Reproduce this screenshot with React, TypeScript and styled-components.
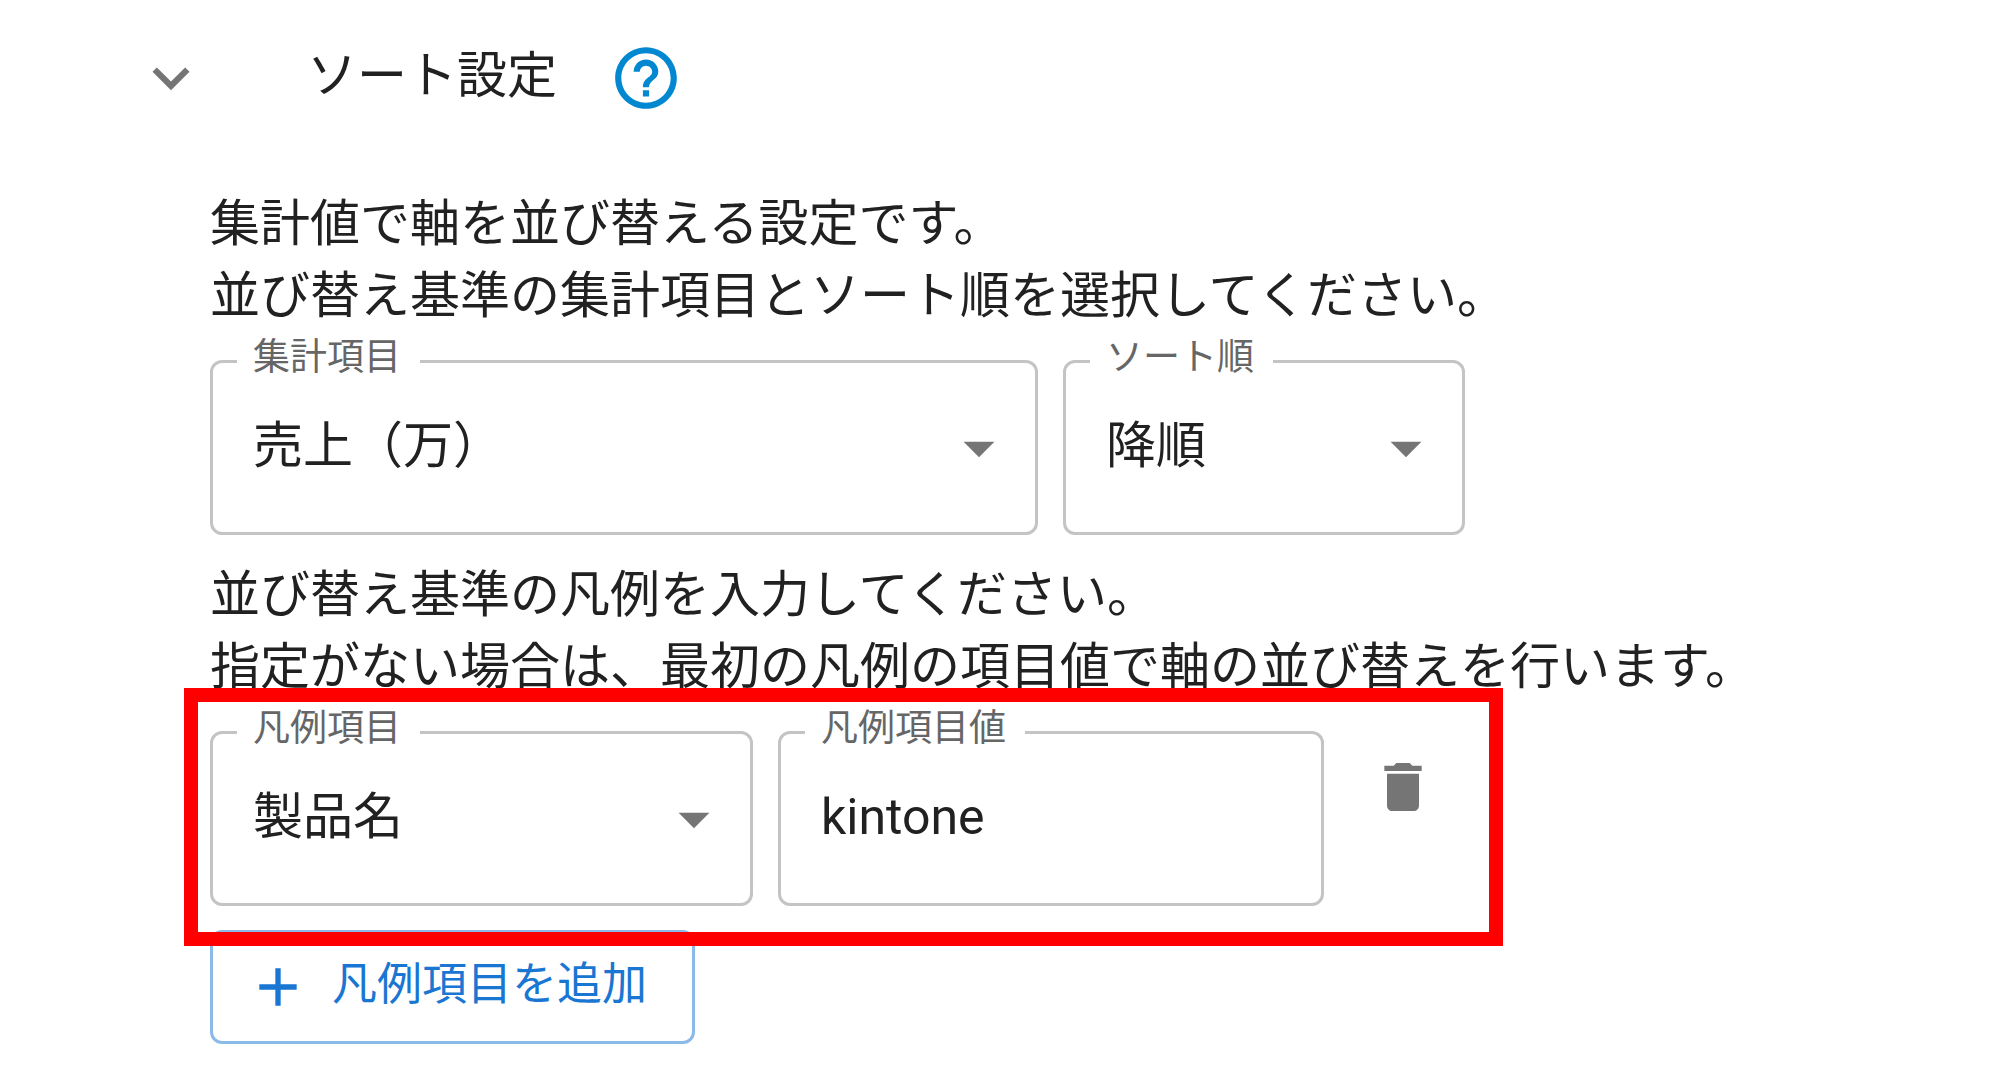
import React, { useId, useState } from "react";
import styled, { createGlobalStyle } from "styled-components";

const GlobalStyle = createGlobalStyle`
  *, *::before, *::after { box-sizing: border-box; }
  body {
    margin: 0;
    background: #fff;
    color: #212121;
    font-family: Roboto, "Noto Sans CJK JP", sans-serif;
    font-size: 50px;
    line-height: 72px;
  }
  button, input, select { font: inherit; color: inherit; }
`;

const Page = styled.main`
  padding: 41px 76px 40px 134px;
`;

const Header = styled.header`
  display: flex;
  align-items: center;
  height: 74px;
  margin-bottom: 73px;
`;

const Title = styled.h2`
  margin: 0 52px 0 99px;
  font-size: 50px;
  font-weight: 400;
  line-height: 74px;
  padding-bottom: 4px;
`;

const IconButton = styled.button<{ $color?: string; $pad?: string }>`
  display: inline-flex;
  flex: none;
  padding: ${(p) => p.$pad ?? "0"};
  border: 0;
  border-radius: 50%;
  background: none;
  color: ${(p) => p.$color ?? "#757575"};
  cursor: pointer;
`;

const Icon = styled.svg<{ $size: number }>`
  display: block;
  flex: none;
  width: ${(p) => p.$size}px;
  height: ${(p) => p.$size}px;
  fill: currentColor;
`;

const Content = styled.section`
  padding-left: 76px;
`;

const Description = styled.p`
  margin: 0 0 28px;
`;

const Row = styled.div`
  position: relative;
  display: flex;
  align-items: flex-start;
  gap: 25px;
  width: fit-content;
  max-width: 100%;
  margin-bottom: 24px;
`;

const FieldBox = styled.div<{ $width: number }>`
  position: relative;
  display: flex;
  flex: 0 1 ${(p) => p.$width}px;
  width: ${(p) => p.$width}px;
  min-width: 0;
  border: 3px solid #c4c4c4;
  border-radius: 12px;
`;

const FieldLabel = styled.label`
  position: absolute;
  top: -24px;
  left: 24px;
  padding: 0 19px 0 16px;
  background: #fff;
  color: #666;
  font-size: 37px;
  line-height: 37px;
  white-space: nowrap;
`;

const controlStyle = `
  width: 100%;
  min-width: 0;
  height: 169px;
  padding: 0 40px 3px;
  border: 0;
  border-radius: 12px;
  outline: 0;
  background: none;
`;

const Select = styled.select`
  ${controlStyle}
  appearance: none;
`;

const Input = styled.input`
  ${controlStyle}
`;

const Arrow = styled(Icon)`
  position: absolute;
  top: 48px;
  right: 19px;
  color: #757575;
  pointer-events: none;
`;

const Highlight = styled.div`
  position: absolute;
  inset: -43px -50px -40px -26px;
  z-index: 1;
  border: 14px solid #f00;
  pointer-events: none;
`;

const AddButton = styled.button`
  display: inline-flex;
  align-items: center;
  gap: 22px;
  height: 114px;
  padding: 0 45px 0 33px;
  border: 3px solid #8cbae8;
  border-radius: 12px;
  background: #fff;
  color: #1976d2;
  font-size: 45px;
  cursor: pointer;
`;

const AddText = styled.span`
  padding-bottom: 4px;
`;

const paths = {
  expand: "M16.59 8.59 12 13.17 7.41 8.59 6 10l6 6 6-6z",
  help: "M11 18h2v-2h-2v2zm1-16C6.48 2 2 6.48 2 12s4.48 10 10 10 10-4.48 10-10S17.52 2 12 2zm0 18c-4.41 0-8-3.59-8-8s3.59-8 8-8 8 3.59 8 8-3.59 8-8 8zm0-14c-2.21 0-4 1.79-4 4h2c0-1.1.9-2 2-2s2 .9 2 2c0 2-3 1.75-3 5h2c0-2.25 3-2.5 3-5 0-2.21-1.79-4-4-4z",
  arrow: "M7 10l5 5 5-5z",
  trash: "M6 19c0 1.1.9 2 2 2h8c1.1 0 2-.9 2-2V7H6v12zM19 4h-3.5l-1-1h-5l-1 1H5v2h14V4z",
  plus: "M19 13h-6v6h-2v-6H5v-2h6V5h2v6h6v2z",
};

function SelectField({ label, width, options }: { label: string; width: number; options: string[] }) {
  const id = useId();
  return (
    <FieldBox $width={width}>
      <FieldLabel htmlFor={id}>{label}</FieldLabel>
      <Select id={id} defaultValue={options[0]}>
        {options.map((o) => (
          <option key={o}>{o}</option>
        ))}
      </Select>
      <Arrow $size={74} viewBox="0 0 24 24" aria-hidden>
        <path d={paths.arrow} />
      </Arrow>
    </FieldBox>
  );
}

function TextField({ label, width, initial }: { label: string; width: number; initial: string }) {
  const id = useId();
  const [value, setValue] = useState(initial);
  return (
    <FieldBox $width={width}>
      <FieldLabel htmlFor={id}>{label}</FieldLabel>
      <Input id={id} type="text" value={value} onChange={(e) => setValue(e.target.value)} />
    </FieldBox>
  );
}

export default function App() {
  return (
    <Page lang="ja">
      <GlobalStyle />
      <Header>
        <IconButton type="button" aria-expanded>
          <Icon $size={74} viewBox="0 0 24 24" aria-hidden>
            <path d={paths.expand} />
          </Icon>
        </IconButton>
        <Title>ソート設定</Title>
        <IconButton type="button" $color="#0288d1">
          <Icon $size={74} viewBox="0 0 24 24" aria-hidden>
            <path d={paths.help} />
          </Icon>
        </IconButton>
      </Header>
      <Content>
        <Description>
          集計値で軸を並び替える設定です。
          <br />
          並び替え基準の集計項目とソート順を選択してください。
        </Description>
        <Row>
          <SelectField label="集計項目" width={828} options={["売上（万）"]} />
          <SelectField label="ソート順" width={402} options={["降順"]} />
        </Row>
        <Description>
          並び替え基準の凡例を入力してください。
          <br />
          指定がない場合は、最初の凡例の項目値で軸の並び替えを行います。
        </Description>
        <Row>
          <SelectField label="凡例項目" width={543} options={["製品名"]} />
          <TextField label="凡例項目値" width={546} initial="kintone" />
          <IconButton type="button" $pad="24px 18px 16px 22px">
            <Icon $size={64} viewBox="0 0 24 24" aria-hidden>
              <path d={paths.trash} />
            </Icon>
          </IconButton>
          <Highlight />
        </Row>
        <AddButton type="button">
          <Icon $size={64} viewBox="0 0 24 24" aria-hidden>
            <path d={paths.plus} />
          </Icon>
          <AddText>凡例項目を追加</AddText>
        </AddButton>
      </Content>
    </Page>
  );
}
